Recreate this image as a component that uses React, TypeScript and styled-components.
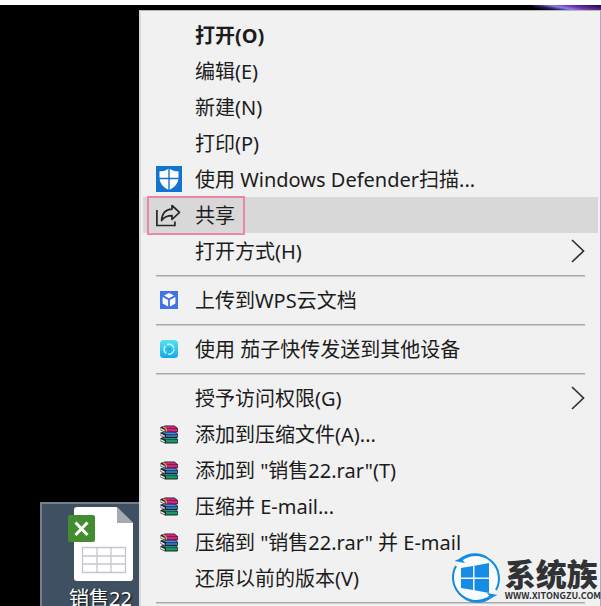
import React from 'react';
import styled, { createGlobalStyle } from 'styled-components';

const GlobalStyle = createGlobalStyle`
  * { box-sizing: border-box; }
  body {
    margin: 0;
    background: #000;
    font-family: "Noto Sans", "Noto Sans CJK SC", sans-serif;
  }
`;

const Desktop = styled.div`
  position: relative;
  height: 100vh;
  overflow: hidden;
  display: grid;
  grid-template-columns: 139px minmax(0, 1fr);
  grid-template-rows: 10px minmax(0, 1fr);
  background: #000;
`;

const TopEdge = styled.div`
  grid-column: 1 / -1;
  display: flex;
  justify-content: flex-end;
  border-top: 5px solid #fff;
`;

const Wallpaper = styled.div`
  width: 68px;
  height: 5px;
  background: linear-gradient(12deg, #000 10%, #29215e 28%, #8b83e8 44%, #7133b4 62%, #22103f 95%);
`;

const IconColumn = styled.div`
  display: flex;
  flex-direction: column;
  justify-content: flex-end;
  padding-left: 40px;
`;

const FileTile = styled.button`
  height: 104px;
  padding: 3px 0 0 26px;
  display: flex;
  flex-direction: column;
  align-items: flex-start;
  justify-content: flex-start;
  border: 1px solid #72808c;
  border-width: 2px 0 0 2px;
  background: #3e5061;
  color: #fff;
  font: inherit;
  font-size: 20px;
  line-height: 28px;
  text-shadow: 1px 1px 2px #000;
  overflow: hidden;

  svg { flex: none; }
`;

const FileLabel = styled.span`
  padding-left: 1px;
  padding-top: 2px;
  white-space: nowrap;
`;

const Menu = styled.div`
  display: flex;
  flex-direction: column;
  padding: 6px 2px 0;
  border: 1px solid #b9b9b9;
  border-left: 2px solid #d8dadd;
  border-right-color: #b9a5b9;
  border-bottom: 0;
  background: #f1f1f1;
`;

const Item = styled.button<{ $active?: boolean; $strong?: boolean }>`
  position: relative;
  flex: none;
  height: 36px;
  padding: 0 13px;
  display: flex;
  align-items: center;
  gap: 13px;
  border: 0;
  background: ${p => (p.$active ? '#d8d8d8' : 'transparent')};
  color: #1c1c1c;
  font: inherit;
  font-size: 20px;
  font-weight: ${p => (p.$strong ? 700 : 400)};
  text-align: left;
  white-space: nowrap;
`;

const IconSlot = styled.span`
  width: 26px;
  height: 26px;
  flex: none;
  display: flex;
  align-items: center;
  justify-content: center;
`;

const Label = styled.span`
  flex: 1;
  padding-bottom: 2px;
`;

const Separator = styled.hr`
  flex: none;
  width: auto;
  height: 1px;
  margin: 6px 13px;
  border: 0;
  background: #a9a9a9;
  box-shadow: 0 1px #cecece;
`;

const Marker = styled.span`
  position: absolute;
  left: 4px;
  top: -1px;
  width: 98px;
  height: 39px;
  border: 2px solid #ee86ab;
`;

const Watermark = styled.div`
  position: absolute;
  right: 0;
  bottom: 2px;
  display: flex;
  align-items: center;
  gap: 4px;
  color: #303236;
`;

const Brand = styled.div`
  display: flex;
  flex-direction: column;
  font-family: "Noto Sans CJK SC", sans-serif;
  white-space: nowrap;
`;

const BrandName = styled.span`
  font-size: 31px;
  font-weight: 900;
  line-height: 36px;
`;

const BrandUrl = styled.span`
  font-size: 9px;
  font-weight: 700;
  line-height: 10px;
`;

const Shield = () => (
  <svg width="26" height="26" viewBox="0 0 26 26">
    <rect width="26" height="26" fill="#1274ce" />
    <path d="M13 2.500c3 2 6 2.800 9.500 2.800v6.200c0 5.800-3.800 9.800-9.500 12.500C7.300 21.300 3.500 17.300 3.500 11.500V5.300C7 5.300 10 4.500 13 2.500z" fill="#fff" />
    <path d="M13 2v22M3 12.500h20" stroke="#1274ce" strokeWidth="1.400" />
  </svg>
);

const Share = () => (
  <svg width="26" height="26" viewBox="0 0 26 26" fill="none" stroke="#262626" strokeWidth="1.700">
    <path d="M.9 8v15.500h18V19.500" />
    <path d="M16 3.500l7.500 6.800L16 17.500v-3.800c-5 0-7.800 1.300-10.400 4.800C6 11.800 9.800 7.500 16 7.200z" strokeLinejoin="round" />
  </svg>
);

const Cloud = () => (
  <svg width="18" height="18" viewBox="0 0 18 18">
    <rect width="18" height="18" fill="#3f74e6" />
    <path d="M9 2l5 2.500L9 7.200 4 4.500zM2.600 6l5.500 3v6.400l-5.500-3zM15.400 6l-5.500 3v6.400l5.500-3z" fill="#fff" />
  </svg>
);

const Transfer = () => (
  <svg width="18" height="18" viewBox="0 0 18 18">
    <defs>
      <linearGradient id="aqua" x1="0" y1="0" x2="0" y2="1">
        <stop offset="0" stopColor="#55e2f1" />
        <stop offset="1" stopColor="#12a8ed" />
      </linearGradient>
    </defs>
    <rect width="18" height="18" rx="3.500" fill="url(#aqua)" />
    <circle cx="9" cy="9.300" r="5" fill="none" stroke="#c4f6fb" strokeWidth="1.500" strokeDasharray="8.500 2" />
    <circle cx="9" cy="9.300" r="2.200" fill="#1eb7df" />
  </svg>
);

const Book = ({ y, top, side }: { y: number; top: string; side: string }) => (
  <g transform={`translate(0 ${y})`}>
    <path d="M.5 1.500L5 0h9.500L18 3v3.300l-1 .7H5L.5 4.800z" fill="#20202b" />
    <path d="M2 1.500L5.500.7h8.800L17 3.100H6z" fill={top} />
    <path d="M6 3.500h11.500v2.500H6z" fill={side} />
    <path d="M.7 2.600l4 2v1.600l-4-2z" fill="#e4e4e4" />
  </g>
);

const Archive = () => (
  <svg width="19" height="19" viewBox="0 0 19 19">
    <Book y={11.500} top="#27966c" side="#159a63" />
    <Book y={6} top="#4c8bd0" side="#2374c4" />
    <Book y={.5} top="#ce2b77" side="#e01b82" />
    <path d="M2.500 1.800l1.500-.6L7 4v2.500H5.500V4.500z" fill="#d29a45" />
  </svg>
);

const Chevron = () => (
  <svg width="14" height="24" viewBox="0 0 14 24" fill="none" stroke="#2e3238" strokeWidth="1.700">
    <path d="M1 1l11.500 11L1 23" />
  </svg>
);

const Spreadsheet = () => (
  <svg width="66" height="76" viewBox="0 0 66 76">
    <path d="M9 0h39.500L65 16v55a3 3 0 0 1-3 3H9a3 3 0 0 1-3-3V3a3 3 0 0 1 3-3z" fill="#fff" />
    <path d="M49 0v16h16z" fill="#a7a9b2" />
    <rect x="0" y="8" width="27" height="27" rx="2" fill="#438c2f" />
    <path d="M7.500 15.500l12 12.500M19.500 15.500L7.500 28" stroke="#fff" strokeWidth="3" />
    <path d="M14.500 40.500h43v25h-43zM14.500 49h43M14.500 57h43M29 40.500v25M43 40.500v25" fill="none" stroke="#c9c3cf" strokeWidth="1.300" />
  </svg>
);

const WindowsLogo = () => (
  <svg width="50" height="52" viewBox="0 0 50 52">
    <circle cx="25" cy="26" r="23" fill="#f8fafb" />
    <g fill="none" stroke="#138be1" strokeWidth="2">
      <path d="M14 5.500A23.500 23.500 0 0 1 45 38" />
      <path d="M36 46.500A23.500 23.500 0 0 1 5 14" />
    </g>
    <path d="M8 7C17-1 31 0 38 6 29 2 19 2 12 8zM42 45C33 53 19 52 12 46c9 4 19 4 26-2z" fill="#138be1" />
    <path d="M3.500 9l6.500-3 4 5zM46.500 43l-6.500 3-4-5z" fill="#138be1" />
    <path d="M10 16l12-2V25.500H10zM23.500 13.700L38 11V25.500H23.500zM10 27h12V38l-12-2zM23.500 27H38v14l-14.500-2.700z" fill="#158ce5" />
  </svg>
);

type Entry = {
  label: string;
  icon?: React.ReactNode;
  strong?: boolean;
  active?: boolean;
  submenu?: boolean;
};

const groups: Entry[][] = [
  [
    { label: '打开(O)', strong: true },
    { label: '编辑(E)' },
    { label: '新建(N)' },
    { label: '打印(P)' },
    { label: '使用 Windows Defender扫描...', icon: <Shield /> },
    { label: '共享', icon: <Share />, active: true },
    { label: '打开方式(H)', submenu: true },
  ],
  [{ label: '上传到WPS云文档', icon: <Cloud /> }],
  [{ label: '使用 茄子快传发送到其他设备', icon: <Transfer /> }],
  [
    { label: '授予访问权限(G)', submenu: true },
    { label: '添加到压缩文件(A)...', icon: <Archive /> },
    { label: '添加到 "销售22.rar"(T)', icon: <Archive /> },
    { label: '压缩并 E-mail...', icon: <Archive /> },
    { label: '压缩到 "销售22.rar" 并 E-mail', icon: <Archive /> },
    { label: '还原以前的版本(V)' },
  ],
  [],
];

export default function App() {
  return (
    <>
      <GlobalStyle />
      <Desktop>
        <TopEdge><Wallpaper /></TopEdge>
        <IconColumn>
          <FileTile>
            <Spreadsheet />
            <FileLabel>销售22</FileLabel>
          </FileTile>
        </IconColumn>
        <Menu role="menu">
          {groups.map((group, index) => (
            <React.Fragment key={index}>
              {index > 0 && <Separator />}
              {group.map(entry => (
                <Item key={entry.label} role="menuitem" $active={entry.active} $strong={entry.strong}>
                  <IconSlot>{entry.icon}</IconSlot>
                  <Label>{entry.label}</Label>
                  {entry.submenu && <Chevron />}
                  {entry.active && <Marker />}
                </Item>
              ))}
            </React.Fragment>
          ))}
        </Menu>
        <Watermark>
          <WindowsLogo />
          <Brand>
            <BrandName>系统族</BrandName>
            <BrandUrl>WWW.XITONGZU.COM</BrandUrl>
          </Brand>
        </Watermark>
      </Desktop>
    </>
  );
}
